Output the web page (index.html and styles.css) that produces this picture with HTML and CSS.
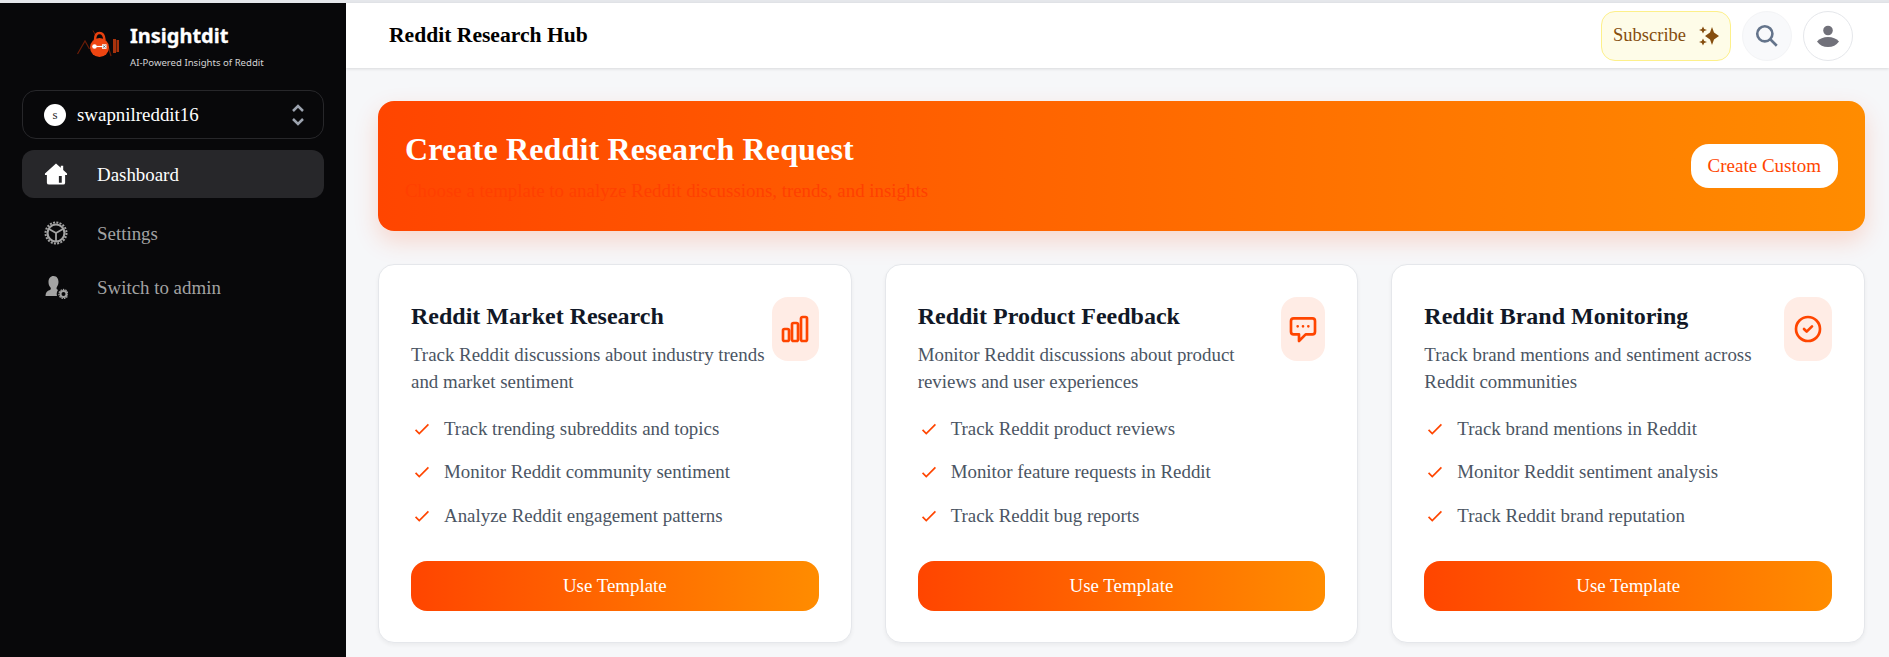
FILE: index.html
```html
<!DOCTYPE html>
<html lang="en">
<head>
    <meta charset="UTF-8">
    <meta name="viewport" content="width=device-width, initial-scale=1.0">
    <title>Reddit Research Hub</title>
    <link rel="stylesheet" href="styles.css">
</head>
<body>
    <div class="app">
        <aside class="sidebar">
            <div class="brand">
                <svg class="brand-logo" viewBox="0 0 46 30" width="46" height="30">
                    <path d="M0.500 24 L8 11 L12.500 19" fill="none" stroke="#6b1d08" stroke-width="1.200"/>
                    <path d="M31 16 L34 26" fill="none" stroke="#6b1d08" stroke-width="1.200"/>
                    <path d="M16 0.500 L19 6" fill="none" stroke="#6b1d08" stroke-width="1"/>
                    <path d="M18 10 Q18 3 22.500 3 Q27 3 27.500 10" fill="none" stroke="#e8410f" stroke-width="2.500"/>
                    <circle cx="22.500" cy="17.500" r="9.500" fill="#ee4511"/>
                    <path d="M17 16.500 H29" stroke="#fff" stroke-width="1.200"/>
                    <circle cx="17.500" cy="16.500" r="2.300" fill="#fff"/>
                    <rect x="25" y="14.300" width="4.500" height="4.500" fill="#fff"/>
                    <path d="M26 15.300 L28.500 17.800 M28.500 15.300 L26 17.800" stroke="#333" stroke-width="0.700"/>
                    <rect x="36" y="9" width="3" height="14" fill="#a8320c"/>
                    <rect x="39.500" y="10" width="2.500" height="12" fill="#a8320c"/>
                </svg>
                <div class="brand-text">
                    <span class="brand-name">Insightdit</span>
                    <span class="brand-tag">AI-Powered Insights of Reddit</span>
                </div>
            </div>
            <div class="account">
                <span class="avatar">s</span>
                <span class="account-name">swapnilreddit16</span>
                <svg class="chevrons" viewBox="0 0 12 24" width="12" height="24" fill="none" stroke="#9ca3af" stroke-width="2.500">
                    <path d="M1 8 L6 3 L11 8"/>
                    <path d="M1 16 L6 21 L11 16"/>
                </svg>
            </div>
            <nav class="menu">
                <a class="menu-item active">
                    <svg viewBox="-0.500 -0.500 25 25" width="24" height="24" fill="#fff">
                        <path fill-rule="evenodd" d="M12 1 L17 5.500 V3.500 H19.500 V7.800 L23.500 11.500 V13 H21.500 V21 Q21.500 23 19.500 23 H5 Q2.500 23 2.500 21 V13 H0.500 V11.500 Z M15 14 V21 H18 V14 Z"/>
                    </svg>
                    <span>Dashboard</span>
                </a>
                <a class="menu-item">
                    <svg viewBox="0 0 24 24" width="24" height="24" fill="none" stroke="#a3a3a3">
                        <circle cx="12" cy="12" r="8.500" stroke-width="2.200"/>
                        <circle cx="12" cy="12" r="10.500" stroke-width="2" stroke-dasharray="2 1.300"/>
                        <path d="M12 12 L5 8 M12 12 L19 8 M12 12 V20" stroke-width="1.800"/>
                    </svg>
                    <span>Settings</span>
                </a>
                <a class="menu-item">
                    <svg viewBox="0 0 24 24" width="24" height="24" fill="#a3a3a3">
                        <path d="M9.500 1 C13 1 14.500 4 14.500 7 C14.500 10 13 11.500 12.500 13 C12.500 14 13 14.500 14 15 C12.500 17 12.500 19 13 21 H1.500 C1.500 17.500 3 16 6 15 C7 14.500 7 13.500 6.500 12.500 C5 11 4.500 9 4.500 7 C4.500 3.500 6.500 1 9.500 1 Z"/>
                        <circle cx="19.500" cy="19" r="3" fill="none" stroke="#a3a3a3" stroke-width="2"/>
                        <circle cx="19.500" cy="19" r="4.500" fill="none" stroke="#a3a3a3" stroke-width="1.300" stroke-dasharray="1.500 1"/>
                    </svg>
                    <span>Switch to admin</span>
                </a>
            </nav>
        </aside>

        <div class="main">
            <header class="topbar">
                <h1 class="topbar-title">Reddit Research Hub</h1>
                <div class="topbar-actions">
                    <button class="subscribe">
                        Subscribe
                        <svg viewBox="0 0 20 20" width="20" height="20" fill="#854d0e">
                            <path d="M13 1 L15 6.500 L20 10 L15 13.500 L13 19 L11 13.500 L6 10 L11 6.500 Z"/>
                            <path d="M4 0.500 L5.200 3 L8 4 L5.200 5 L4 7.500 L2.800 5 L0 4 L2.800 3 Z"/>
                            <path d="M4 12.500 L5.200 15 L8 16 L5.200 17 L4 19.500 L2.800 17 L0 16 L2.800 15 Z"/>
                        </svg>
                    </button>
                    <button class="round-btn search">
                        <svg viewBox="0 0 24 24" width="26" height="26" fill="none" stroke="#64748b" stroke-width="2.400">
                            <path d="M21 21l-6-6m2-5a7 7 0 11-14 0 7 7 0 0114 0z"/>
                        </svg>
                    </button>
                    <button class="round-btn profile">
                        <svg viewBox="0 0 24 24" width="24" height="24" fill="#71717a">
                            <circle cx="12" cy="6.500" r="4.800"/>
                            <path d="M1 17.500 Q5 13 12 13 Q19 13 23 17.500 Q19 23 12 23 Q5 23 1 17.500 Z"/>
                        </svg>
                    </button>
                </div>
            </header>

            <main class="content">
                <section class="banner">
                    <div>
                        <h2 class="banner-title">Create Reddit Research Request</h2>
                        <p class="banner-sub">Choose a template to analyze Reddit discussions, trends, and insights</p>
                    </div>
                    <button class="banner-btn">Create Custom</button>
                </section>

                <section class="cards">
                    <article class="card">
                        <div class="card-head">
                            <div>
                                <h3 class="card-title">Reddit Market Research</h3>
                                <p class="card-desc">Track Reddit discussions about industry trends and market sentiment</p>
                            </div>
                            <span class="card-icon w46">
                                <svg viewBox="0 0 24 24" width="32" height="32" fill="none" stroke="#ff4500" stroke-width="2">
                                    <path d="M3 13.125C3 12.504 3.504 12 4.125 12h2.250c.621 0 1.125.504 1.125 1.125v6.750C7.500 20.496 6.996 21 6.375 21h-2.250A1.125 1.125 0 0 1 3 19.875v-6.750ZM9.750 8.625c0-.621.504-1.125 1.125-1.125h2.250c.621 0 1.125.504 1.125 1.125v11.250c0 .621-.504 1.125-1.125 1.125h-2.250a1.125 1.125 0 0 1-1.125-1.125V8.625ZM16.500 4.125c0-.621.504-1.125 1.125-1.125h2.250C20.496 3 21 3.504 21 4.125v15.750c0 .621-.504 1.125-1.125 1.125h-2.250a1.125 1.125 0 0 1-1.125-1.125V4.125Z"/>
                                </svg>
                            </span>
                        </div>
                        <ul class="features">
                            <li><svg viewBox="0 0 24 24" width="22" height="22" fill="none" stroke="#ff4500" stroke-width="1.800"><path d="M5 13l4 4L19 7"/></svg>Track trending subreddits and topics</li>
                            <li><svg viewBox="0 0 24 24" width="22" height="22" fill="none" stroke="#ff4500" stroke-width="1.800"><path d="M5 13l4 4L19 7"/></svg>Monitor Reddit community sentiment</li>
                            <li><svg viewBox="0 0 24 24" width="22" height="22" fill="none" stroke="#ff4500" stroke-width="1.800"><path d="M5 13l4 4L19 7"/></svg>Analyze Reddit engagement patterns</li>
                        </ul>
                        <button class="use-btn">Use Template</button>
                    </article>

                    <article class="card">
                        <div class="card-head">
                            <div>
                                <h3 class="card-title">Reddit Product Feedback</h3>
                                <p class="card-desc">Monitor Reddit discussions about product reviews and user experiences</p>
                            </div>
                            <span class="card-icon w44">
                                <svg viewBox="0 0 24 24" width="32" height="32" fill="none" stroke="#ff4500" stroke-width="2" stroke-linecap="round" stroke-linejoin="round">
                                    <path d="M8 10h.01M12 10h.01M16 10h.01M9 16H5a2 2 0 01-2-2V6a2 2 0 012-2h14a2 2 0 012 2v8a2 2 0 01-2 2h-5l-5 5v-5z"/>
                                </svg>
                            </span>
                        </div>
                        <ul class="features">
                            <li><svg viewBox="0 0 24 24" width="22" height="22" fill="none" stroke="#ff4500" stroke-width="1.800"><path d="M5 13l4 4L19 7"/></svg>Track Reddit product reviews</li>
                            <li><svg viewBox="0 0 24 24" width="22" height="22" fill="none" stroke="#ff4500" stroke-width="1.800"><path d="M5 13l4 4L19 7"/></svg>Monitor feature requests in Reddit</li>
                            <li><svg viewBox="0 0 24 24" width="22" height="22" fill="none" stroke="#ff4500" stroke-width="1.800"><path d="M5 13l4 4L19 7"/></svg>Track Reddit bug reports</li>
                        </ul>
                        <button class="use-btn">Use Template</button>
                    </article>

                    <article class="card">
                        <div class="card-head">
                            <div>
                                <h3 class="card-title">Reddit Brand Monitoring</h3>
                                <p class="card-desc">Track brand mentions and sentiment across Reddit communities</p>
                            </div>
                            <span class="card-icon w48">
                                <svg viewBox="0 0 24 24" width="32" height="32" fill="none" stroke="#ff4500" stroke-width="2" stroke-linecap="round" stroke-linejoin="round">
                                    <path d="M9 12l2 2 4-4m6 2a9 9 0 11-18 0 9 9 0 0118 0z"/>
                                </svg>
                            </span>
                        </div>
                        <ul class="features">
                            <li><svg viewBox="0 0 24 24" width="22" height="22" fill="none" stroke="#ff4500" stroke-width="1.800"><path d="M5 13l4 4L19 7"/></svg>Track brand mentions in Reddit</li>
                            <li><svg viewBox="0 0 24 24" width="22" height="22" fill="none" stroke="#ff4500" stroke-width="1.800"><path d="M5 13l4 4L19 7"/></svg>Monitor Reddit sentiment analysis</li>
                            <li><svg viewBox="0 0 24 24" width="22" height="22" fill="none" stroke="#ff4500" stroke-width="1.800"><path d="M5 13l4 4L19 7"/></svg>Track Reddit brand reputation</li>
                        </ul>
                        <button class="use-btn">Use Template</button>
                    </article>
                </section>
            </main>
        </div>
    </div>
</body>
</html>
```

FILE: styles.css
```css
/* General */
* {
    box-sizing: border-box;
}
html, body {
    height: 100%;
}
body {
    margin: 0;
    overflow: hidden;
    background-color: #fff;
    font-family: "Liberation Serif", "Times New Roman", serif;
}
button {
    font-family: inherit;
    cursor: pointer;
}

.app {
    display: flex;
    height: 100vh;
    border-top: 3px solid #e5e7eb;
}

/* Sidebar */
.sidebar {
    flex: 0 0 346px;
    padding: 9px 22px 0;
    background: #08080a;
}
.brand {
    display: flex;
    align-items: flex-start;
    gap: 7px;
    height: 78px;
    padding-left: 55px;
}
.brand-logo {
    margin-top: 18px;
}
.brand-text {
    display: flex;
    flex-direction: column;
    font-family: "Noto Sans", sans-serif;
}
.brand-name {
    margin-top: 10px;
    font-size: 20px;
    line-height: 28px;
    font-weight: 700;
    color: #fff;
    -webkit-text-stroke: 0.3px #fff;
}
.brand-tag {
    margin-top: 6px;
    font-size: 9.600px;
    line-height: 14px;
    color: #d4d4d4;
}

.account {
    display: flex;
    align-items: center;
    height: 49px;
    padding: 0 19px 0 21px;
    border: 1px solid #27272a;
    border-radius: 14px;
    color: #fff;
}
.avatar {
    display: flex;
    align-items: center;
    justify-content: center;
    width: 22px;
    height: 22px;
    margin-right: 11px;
    border-radius: 50%;
    background: #fff;
    color: #27272a;
    font-size: 13px;
}
.account-name {
    flex: 1;
    font-size: 18.900px;
}

.menu {
    display: flex;
    flex-direction: column;
    margin-top: 11px;
}
.menu-item {
    display: flex;
    align-items: center;
    gap: 29px;
    height: 48px;
    margin-bottom: 6px;
    padding-left: 22px;
    border-radius: 12px;
    color: #a3a3a3;
    font-size: 18.900px;
}
.menu-item span {
    margin-top: 2px;
}
.menu-item.active {
    margin-bottom: 11px;
    background: #27272a;
    color: #fff;
}

/* Main column */
.main {
    flex: 1;
    display: flex;
    flex-direction: column;
    min-width: 0;
    background: #f6f7f9;
}
.topbar {
    display: flex;
    align-items: center;
    justify-content: space-between;
    flex: 0 0 65px;
    padding: 0 36px 0 43px;
    background: #fff;
    box-shadow: 0 1px 3px rgba(0, 0, 0, 0.12);
}
.topbar-title {
    margin: 0;
    font-size: 21.600px;
    color: #000;
}
.topbar-actions {
    display: flex;
    gap: 11px;
}
.subscribe {
    display: flex;
    align-items: center;
    gap: 13px;
    height: 50px;
    padding: 0 11px;
    border: 1px solid #fdf08a;
    border-radius: 14px;
    background: #fefce8;
    color: #854d0e;
    font-size: 18.500px;
}
.round-btn {
    display: flex;
    align-items: center;
    justify-content: center;
    width: 50px;
    height: 50px;
    padding: 0;
    border-radius: 50%;
}
.search {
    border: 1px solid #f3f4f6;
    background: #f8f9fb;
}
.profile {
    border: 1px solid #e5e7eb;
    background: #fff;
}

.content {
    padding: 33px 24px 0 32px;
}

/* Banner */
.banner {
    display: flex;
    align-items: center;
    justify-content: space-between;
    height: 130px;
    padding: 0 27px;
    border-radius: 16px;
    background: linear-gradient(90deg, #ff4500, #ff8c00);
    box-shadow: 0 10px 25px rgba(255, 69, 0, 0.18);
}
.banner-title {
    margin: 0 0 12px;
    font-size: 32px;
    line-height: 38px;
    letter-spacing: 0.16px;
    color: #fff;
}
.banner-sub {
    margin: 0;
    font-size: 18.900px;
    color: #ff4000;
}
.banner-btn {
    height: 44px;
    padding: 0 17px;
    border: 0;
    border-radius: 18px;
    background: #fff;
    color: #ff4500;
    font-size: 19px;
}

/* Template cards */
.cards {
    display: grid;
    grid-template-columns: repeat(3, 1fr);
    gap: 33px;
    margin-top: 33px;
}
.card {
    height: 379px;
    padding: 32px 32px 0;
    border: 1px solid #e5e7eb;
    border-radius: 16px;
    background: #fff;
    box-shadow: 0 2px 4px rgba(0, 0, 0, 0.05);
}
.card-head {
    display: flex;
    justify-content: space-between;
    align-items: flex-start;
    gap: 6px;
}
.card-title {
    margin: 5px 0 11px;
    font-size: 24px;
    line-height: 28px;
    color: #111827;
}
.card-desc {
    margin: 0;
    font-size: 18.900px;
    line-height: 27px;
    color: #4b5563;
}
.card-icon {
    display: flex;
    align-items: center;
    justify-content: center;
    flex: 0 0 auto;
    height: 64px;
    border-radius: 16px;
    background: #ffece5;
}
.w44 {
    width: 44px;
}
.w46 {
    width: 47px;
}
.w48 {
    width: 48px;
}
.features {
    margin: 12px 0 0;
    padding: 0;
    list-style: none;
}
.features li {
    display: flex;
    align-items: center;
    gap: 11px;
    height: 43.500px;
    font-size: 18.900px;
    color: #4b5563;
}
.use-btn {
    display: block;
    width: 100%;
    height: 50px;
    margin-top: 23px;
    border: 0;
    border-radius: 16px;
    background: linear-gradient(90deg, #ff4500, #ff8c00);
    color: #fff;
    font-size: 18.900px;
}
```
